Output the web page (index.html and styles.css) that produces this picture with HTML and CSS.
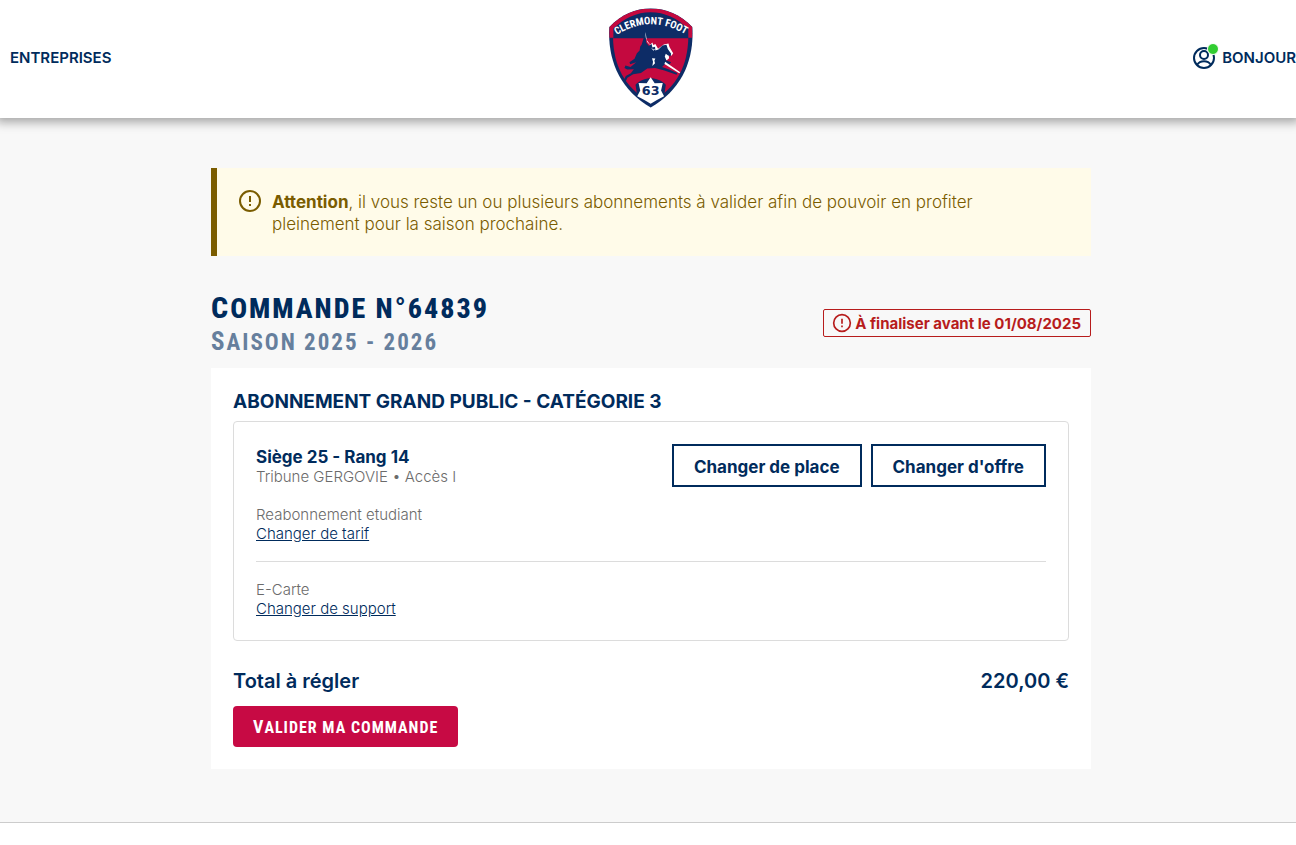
FILE: index.html
```html
<!DOCTYPE html>
<html lang="fr">
<head>
    <meta charset="UTF-8">
    <meta name="viewport" content="width=device-width, initial-scale=1.0">
    <title>Commande n°64839 - Clermont Foot 63</title>
    <link rel="stylesheet" href="styles.css">
</head>
<body>
    <header class="header">
        <nav>
            <a href="#" class="nav-link">ENTREPRISES</a>
        </nav>

        <a href="#" class="logo" aria-label="Clermont Foot 63">
            <svg viewBox="27 24 250 297" width="84" height="100">
                <defs>
                    <clipPath id="shield">
                        <path d="M28 80C64 42 106 25 151 25s88 17 124 55c6 98-31 186-124 240C59 266 22 178 28 80z"/>
                    </clipPath>
                </defs>
                <!-- blason -->
                <path fill="#0d2c66" d="M28 80C64 42 106 25 151 25s88 17 124 55c6 98-31 186-124 240C59 266 22 178 28 80z"/>
                <path fill="#c4093f" d="M28 112V80C64 42 106 25 151 25s88 17 124 55v32h-12V85c-34-32-70-49-112-49S73 53 40 85v27z" clip-path="url(#shield)"/>
                <path fill="#c4093f" d="M39 114h224c-2 76-30 146-112 191C69 260 41 190 39 114z"/>
                <!-- ballon -->
                <path fill="#0d2c66" d="M106 252c24-26 66-26 90 0l-4 28-41 34-41-34z"/>
                <path fill="#fff" d="M151 230l12 18 24-1-5 22 9 17-20 11-20 12-20-12-20-11 9-17-5-22 24 1z"/>
                <!-- cavalier -->
                <path fill="#fff" d="M133 110l3-14 4 28 9 10 7-8 3 8 6-3 8 14 17-13 14-3 3 11 11 18-5 8-9-6 2 13-8 7-8-6-20-12z"/>
                <path fill="#0d2c66" d="M135 97l3 30 8 10 8-6 2 10 8-2 1 11 9-3 12-12 12-2 4 13 10 14-2 7-8-3-6-4-3 8 5 12 14 5-5 6-13-1-9 9 21 8 24 10-2 5-36-12-28-8-23 2-19 13-23 4-17 10-6 12-5-4 6-13 15-8 9-12-20 1-8-5 3-7 15 4 17-14-18 6-2-6 15-10 7-17 8-8 2-12 4-5z"/>
                <path fill="#fff" d="M155 173l10 1-3 7 2 7-8 8 2-12zM152 141l7 6 6-2-6 6zM194 184l45 31-3 3-44-28z"/>
                <!-- textes -->
                <path id="arc" fill="none" d="M52 103Q151 42 252 101"/>
                <text class="logo-name"><textPath href="#arc" startOffset="50%">CLERMONT FOOT</textPath></text>
                <text class="logo-number" x="151" y="284">63</text>
            </svg>
        </a>

        <a href="#" class="nav-link account">
            <span class="avatar">
                <svg viewBox="0 0 24 24" width="24" height="24" fill="none" stroke="currentColor" stroke-width="2">
                    <circle cx="12" cy="12" r="10"/>
                    <circle cx="12" cy="9" r="4"/>
                    <path d="M5 19c3-5 11-5 14 0"/>
                </svg>
                <span class="status"></span>
            </span>
            BONJOUR
        </a>
    </header>

    <main class="main">
        <div class="container">
            <div class="alert" role="alert">
                <svg viewBox="0 0 24 24" width="24" height="24" fill="none" stroke="currentColor" stroke-width="2">
                    <circle cx="12" cy="12" r="10"/>
                    <path d="M12 7v6M12 15v2"/>
                </svg>
                <p><strong>Attention</strong>, il vous reste un ou plusieurs abonnements à valider afin de pouvoir en profiter pleinement pour la saison prochaine.</p>
            </div>

            <div class="order-header">
                <div>
                    <h1>Commande N°64839</h1>
                    <p class="season">Saison 2025 - 2026</p>
                </div>
                <div class="deadline">
                    <svg viewBox="0 0 24 24" width="20" height="20" fill="none" stroke="currentColor" stroke-width="2">
                        <circle cx="12" cy="12" r="10"/>
                        <path d="M12 7v6M12 15v2"/>
                    </svg>
                    À finaliser avant le 01/08/2025
                </div>
            </div>

            <section class="card">
                <h2>ABONNEMENT GRAND PUBLIC - CATÉGORIE 3</h2>

                <div class="ticket">
                    <div class="ticket-top">
                        <div>
                            <h3>Siège 25 - Rang 14</h3>
                            <p>Tribune GERGOVIE • Accès I</p>
                        </div>
                        <div class="actions">
                            <button type="button" class="btn-outline">Changer de place</button>
                            <button type="button" class="btn-outline">Changer d'offre</button>
                        </div>
                    </div>
                    <div class="option">
                        <p>Reabonnement etudiant</p>
                        <a href="#">Changer de tarif</a>
                    </div>
                    <div class="option">
                        <p>E-Carte</p>
                        <a href="#">Changer de support</a>
                    </div>
                </div>

                <div class="total">
                    <span>Total à régler</span>
                    <span>220,00 €</span>
                </div>
                <button type="submit" class="btn-primary"><span>Valider ma commande</span></button>
            </section>
        </div>
    </main>

    <footer class="footer"></footer>
</body>
</html>
```
FILE: styles.css
```css
:root {
    --navy: #002b5c;
    --red: #c70a44;
    --grey: #6b6b6b;
    --border: #dcdcdc;
    --titles: "Liberation Sans Narrow", "Roboto Condensed", "Open Sans Condensed", Roboto, sans-serif;
}

* {
    box-sizing: border-box;
}

body {
    margin: 0;
    background: #fff;
    color: var(--navy);
    font-family: Inter, "Open Sans", sans-serif;
    font-size: 15px;
    line-height: 19px;
}

h1, h2, h3, p {
    margin: 0;
}

a {
    color: var(--navy);
}

svg {
    display: block;
    flex-shrink: 0;
}

/* En-tête */
.header {
    position: relative;
    display: grid;
    grid-template-columns: 1fr auto 1fr;
    align-items: center;
    height: 118px;
    padding: 0 0 3px 6px;
    background: #fff;
    box-shadow: 0 0 10px 4px rgba(0, 0, 0, 0.35);
}

.nav-link {
    padding-left: 4px;
    font-size: 15px;
    font-weight: 600;
    text-decoration: none;
}

.account {
    display: flex;
    align-items: center;
    justify-self: end;
    gap: 6px;
}

.avatar {
    position: relative;
}

.status {
    position: absolute;
    top: -3px;
    right: -3px;
    width: 12px;
    height: 12px;
    border: 1px solid #fff;
    border-radius: 50%;
    background: #32cd32;
}

.logo-name {
    fill: #fff;
    font-family: var(--titles);
    font-size: 31px;
    font-weight: bold;
    text-anchor: middle;
}

.logo-number {
    fill: #0d2c66;
    font-family: "DejaVu Sans", sans-serif;
    font-size: 38px;
    font-weight: bold;
    text-anchor: middle;
}

/* Contenu */
.main {
    padding: 50px 0 53px 6px;
    background: #f8f8f8;
}

.container {
    max-width: 880px;
    margin: 0 auto;
}

.alert {
    display: flex;
    gap: 10px;
    padding: 22px 90px 22px 21px;
    border-left: 6px solid #7a5c00;
    background: #fffbe9;
    color: #7a5c00;
    font-size: 17px;
    font-weight: 300;
    line-height: 22px;
}

.alert svg {
    margin-top: -1px;
}

.alert p {
    padding-top: 1px;
    margin-bottom: -1px;
}

.alert strong {
    font-weight: 700;
}

.order-header {
    display: flex;
    align-items: center;
    justify-content: space-between;
    padding: 35px 0 9px;
}

h1,
.season {
    font-family: var(--titles);
    text-transform: uppercase;
    letter-spacing: 2px;
}

h1 {
    font-size: 28px;
    font-weight: 800;
    line-height: 34px;
}

h1::first-letter {
    font-size: 30px;
}

.season {
    color: #667f9d;
    font-size: 23px;
    font-weight: 700;
    line-height: 32px;
}

.season::first-letter {
    font-size: 25px;
}

.deadline {
    display: flex;
    align-items: center;
    gap: 3px;
    height: 28px;
    padding: 0 9px 0 8px;
    margin-bottom: 4px;
    border: 1px solid #b71c1c;
    border-radius: 2px;
    color: #b71c1c;
    font-weight: 700;
}

.card {
    padding: 22px;
    background: #fff;
}

h2 {
    padding-top: 1px;
    margin-bottom: 8px;
    font-size: 19px;
    font-weight: 700;
    line-height: 22px;
}

.ticket {
    padding: 22px;
    border: 1px solid var(--border);
    border-radius: 4px;
    color: var(--grey);
    font-weight: 300;
}

.ticket-top {
    display: flex;
    justify-content: space-between;
}

h3 {
    padding-top: 3px;
    color: var(--navy);
    font-size: 17px;
    font-weight: 700;
    line-height: 20px;
}

.actions {
    display: flex;
    gap: 9px;
}

.btn-outline {
    height: 43px;
    padding: 2px 20px 0;
    border: 2px solid var(--navy);
    background: #fff;
    color: var(--navy);
    font: 700 17px Inter, "Open Sans", sans-serif;
    cursor: pointer;
}

.option {
    padding: 18px 0;
}

.option + .option {
    padding-bottom: 0;
    border-top: 1px solid var(--border);
}

.total {
    display: flex;
    justify-content: space-between;
    margin: 29px 0 14px;
    font-size: 20px;
    font-weight: 600;
    line-height: 22px;
}

.btn-primary {
    height: 41px;
    padding: 0 20px;
    border: 0;
    border-radius: 4px;
    background: var(--red);
    color: #fff;
    font: bold 16px var(--titles);
    letter-spacing: 1px;
    text-transform: uppercase;
    cursor: pointer;
}

.btn-primary span {
    display: block;
}

.btn-primary span::first-letter {
    font-size: 18px;
}

/* Pied de page */
.footer {
    border-top: 1px solid #ccc;
}
```
